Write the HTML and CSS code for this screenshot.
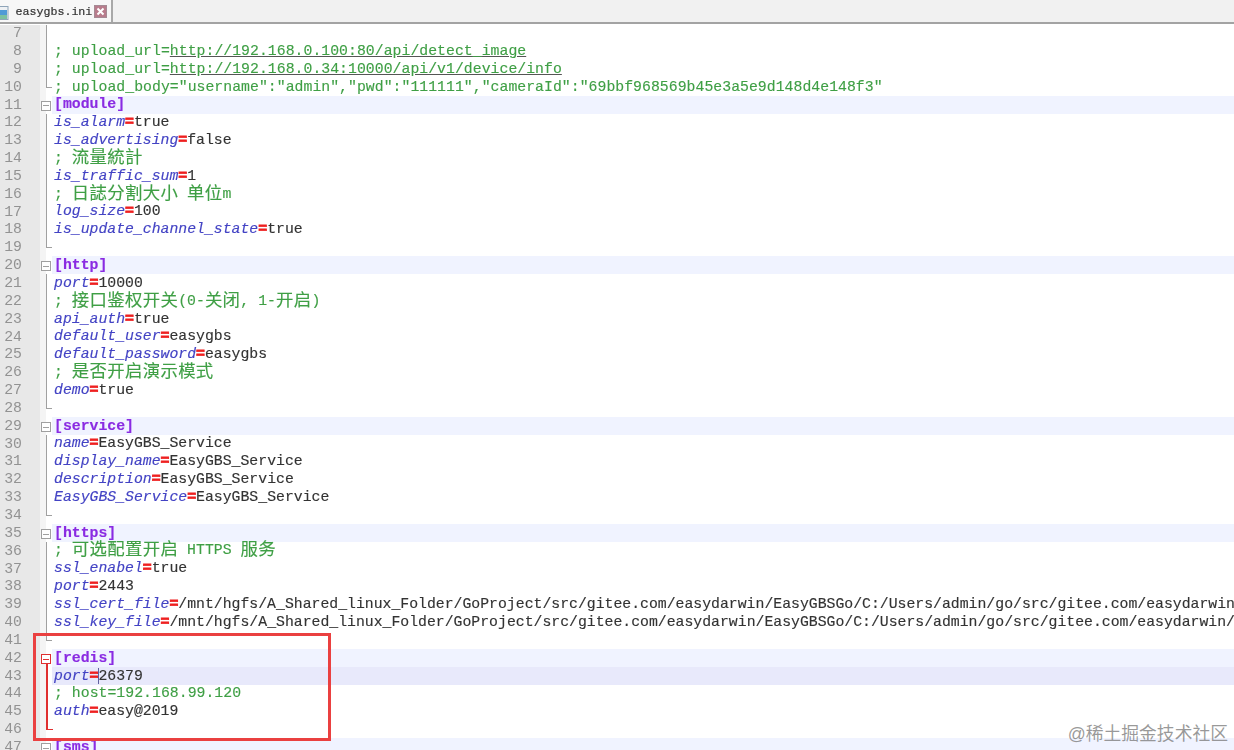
FILE: index.html
```html
<!DOCTYPE html>
<html lang="zh">
<head>
    <meta charset="utf-8">
    <title>easygbs.ini</title>
    <link rel="stylesheet" href="styles.css">
</head>
<body>
    <div class="tabbar">
        <div class="tab">
            <svg class="tab-icon" width="9" height="14" viewBox="0 0 9 14"><rect x="-6" y="0.5" width="14" height="13" fill="#eef1f4" stroke="#8fa4b8"/><rect x="-5" y="4" width="12" height="5" fill="#4f9ad6"/><rect x="-5" y="9" width="12" height="4" fill="#7cc0a0"/></svg>
            <span class="tab-name">easygbs.ini</span>
            <svg class="tab-close" width="13" height="13" viewBox="0 0 13 13"><rect x="0.5" y="0.5" width="12" height="12" fill="#b87c8c" stroke="#a58a94"/><path d="M3.5 3.5l6 6M9.5 3.5l-6 6" stroke="#fff" stroke-width="2"/></svg>
        </div>
    </div>

    <div class="editor">
        <div class="row"><span class="num">7</span><span class="fold line"></span><span class="code"></span></div>
        <div class="row"><span class="num">8</span><span class="fold line"></span><span class="code c">; upload_url=<u>http://192.168.0.100:80/api/detect_image</u></span></div>
        <div class="row"><span class="num">9</span><span class="fold line"></span><span class="code c">; upload_url=<u>http://192.168.0.34:10000/api/v1/device/info</u></span></div>
        <div class="row"><span class="num">10</span><span class="fold end"></span><span class="code c">; upload_body="username":"admin","pwd":"111111","cameraId":"69bbf968569b45e3a5e9d148d4e148f3"</span></div>
        <div class="row head"><span class="num">11</span><span class="fold box"></span><span class="code s">[module]</span></div>
        <div class="row"><span class="num">12</span><span class="fold line"></span><span class="code"><i>is_alarm</i><b>=</b>true</span></div>
        <div class="row"><span class="num">13</span><span class="fold line"></span><span class="code"><i>is_advertising</i><b>=</b>false</span></div>
        <div class="row"><span class="num">14</span><span class="fold line"></span><span class="code c">; <span class="cjk">流量統計</span></span></div>
        <div class="row"><span class="num">15</span><span class="fold line"></span><span class="code"><i>is_traffic_sum</i><b>=</b>1</span></div>
        <div class="row"><span class="num">16</span><span class="fold line"></span><span class="code c">; <span class="cjk">日誌分割大小</span> <span class="cjk">单位</span>m</span></div>
        <div class="row"><span class="num">17</span><span class="fold line"></span><span class="code"><i>log_size</i><b>=</b>100</span></div>
        <div class="row"><span class="num">18</span><span class="fold line"></span><span class="code"><i>is_update_channel_state</i><b>=</b>true</span></div>
        <div class="row"><span class="num">19</span><span class="fold end"></span><span class="code"></span></div>
        <div class="row head"><span class="num">20</span><span class="fold box"></span><span class="code s">[http]</span></div>
        <div class="row"><span class="num">21</span><span class="fold line"></span><span class="code"><i>port</i><b>=</b>10000</span></div>
        <div class="row"><span class="num">22</span><span class="fold line"></span><span class="code c">; <span class="cjk">接口鉴权开关</span>(0-<span class="cjk">关闭</span>, 1-<span class="cjk">开启</span>)</span></div>
        <div class="row"><span class="num">23</span><span class="fold line"></span><span class="code"><i>api_auth</i><b>=</b>true</span></div>
        <div class="row"><span class="num">24</span><span class="fold line"></span><span class="code"><i>default_user</i><b>=</b>easygbs</span></div>
        <div class="row"><span class="num">25</span><span class="fold line"></span><span class="code"><i>default_password</i><b>=</b>easygbs</span></div>
        <div class="row"><span class="num">26</span><span class="fold line"></span><span class="code c">; <span class="cjk">是否开启演示模式</span></span></div>
        <div class="row"><span class="num">27</span><span class="fold line"></span><span class="code"><i>demo</i><b>=</b>true</span></div>
        <div class="row"><span class="num">28</span><span class="fold end"></span><span class="code"></span></div>
        <div class="row head"><span class="num">29</span><span class="fold box"></span><span class="code s">[service]</span></div>
        <div class="row"><span class="num">30</span><span class="fold line"></span><span class="code"><i>name</i><b>=</b>EasyGBS_Service</span></div>
        <div class="row"><span class="num">31</span><span class="fold line"></span><span class="code"><i>display_name</i><b>=</b>EasyGBS_Service</span></div>
        <div class="row"><span class="num">32</span><span class="fold line"></span><span class="code"><i>description</i><b>=</b>EasyGBS_Service</span></div>
        <div class="row"><span class="num">33</span><span class="fold line"></span><span class="code"><i>EasyGBS_Service</i><b>=</b>EasyGBS_Service</span></div>
        <div class="row"><span class="num">34</span><span class="fold end"></span><span class="code"></span></div>
        <div class="row head"><span class="num">35</span><span class="fold box"></span><span class="code s">[https]</span></div>
        <div class="row"><span class="num">36</span><span class="fold line"></span><span class="code c">; <span class="cjk">可选配置开启</span> HTTPS <span class="cjk">服务</span></span></div>
        <div class="row"><span class="num">37</span><span class="fold line"></span><span class="code"><i>ssl_enabel</i><b>=</b>true</span></div>
        <div class="row"><span class="num">38</span><span class="fold line"></span><span class="code"><i>port</i><b>=</b>2443</span></div>
        <div class="row"><span class="num">39</span><span class="fold line"></span><span class="code"><i>ssl_cert_file</i><b>=</b>/mnt/hgfs/A_Shared_linux_Folder/GoProject/src/gitee.com/easydarwin/EasyGBSGo/C:/Users/admin/go/src/gitee.com/easydarwin</span></div>
        <div class="row"><span class="num">40</span><span class="fold line"></span><span class="code"><i>ssl_key_file</i><b>=</b>/mnt/hgfs/A_Shared_linux_Folder/GoProject/src/gitee.com/easydarwin/EasyGBSGo/C:/Users/admin/go/src/gitee.com/easydarwin/</span></div>
        <div class="row"><span class="num">41</span><span class="fold end"></span><span class="code"></span></div>
        <div class="row head"><span class="num">42</span><span class="fold box active"></span><span class="code s">[redis]</span></div>
        <div class="row current"><span class="num">43</span><span class="fold line active"></span><span class="code"><i>port</i><b>=</b><span class="caret"></span>26379</span></div>
        <div class="row"><span class="num">44</span><span class="fold line active"></span><span class="code c">; host=192.168.99.120</span></div>
        <div class="row"><span class="num">45</span><span class="fold line active"></span><span class="code"><i>auth</i><b>=</b>easy@2019</span></div>
        <div class="row"><span class="num">46</span><span class="fold end active"></span><span class="code"></span></div>
        <div class="row head"><span class="num">47</span><span class="fold box"></span><span class="code s">[sms]</span></div>
    </div>

    <!-- annotation drawn over the screenshot -->
    <div class="redbox"></div>
    <div class="watermark">@稀土掘金技术社区</div>
</body>
</html>
```

FILE: styles.css
```css
body {
    margin: 0;
    height: 750px;
    overflow: hidden;
    background-color: white;
    font-family: "Liberation Mono", "Noto Sans CJK SC", monospace;
    font-size: 14.8px;
    position: relative;
}
.tabbar {
    height: 22px;
    background-color: #f1f1f1;
    border-bottom: 2px solid #a3a3a3;
    display: flex;
    filter: blur(0.3px);
}
.tab {
    width: 113px;
    height: 22px;
    box-sizing: border-box;
    background-color: #f7f7f7;
    border-right: 2px solid #a8a8a8;
    display: flex;
    align-items: center;
    color: #333;
    font-size: 11.65px;
    -webkit-text-stroke: 0.2px #333;
}
.tab-icon {
    flex: none;
    margin-top: 3px;
}
.tab-name {
    margin-left: 6.5px;
    width: 78.5px;
    flex: none;
    white-space: nowrap;
}
.tab-close {
    flex: none;
}
.editor {
    padding-top: 0.5px;
    filter: blur(0.3px);
}
.row {
    display: flex;
    height: 17.85px;
}
.num, .code {
    box-sizing: border-box;
    padding-top: 1.5px;
    line-height: 15.85px;
}
.num {
    width: 40px;
    flex: none;
    padding-top: 1.7px;
    padding-right: 18px;
    text-align: right;
    color: #929292;
    background-color: #e8e8e8;
}
.fold {
    width: 12px;
    flex: none;
    position: relative;
    background: linear-gradient(90deg, #f4f4f4 6px, white 6px);
    --fold: #a0a0a0;
    --weight: 1px;
}
.fold.active {
    --fold: #e03030;
    --weight: 2px;
}
.fold.line::before, .fold.end::before {
    content: "";
    position: absolute;
    left: 6px;
    top: 0;
    bottom: 0;
    border-left: var(--weight) solid var(--fold);
}
.fold.end::before {
    bottom: 8px;
    width: 5px;
    border-bottom: 1px solid var(--fold);
}
.fold.box::before {
    content: "";
    position: absolute;
    left: 1px;
    top: 5px;
    width: 8px;
    height: 8px;
    border: 1px solid var(--fold);
    background: linear-gradient(var(--fold), var(--fold)) center / 6px 1px no-repeat white;
}
.fold.box.active::after {
    content: "";
    position: absolute;
    left: 6px;
    top: 15px;
    bottom: 0;
    border-left: 2px solid var(--fold);
}
.code {
    flex: 1;
    min-width: 0;
    padding-left: 2px;
    white-space: nowrap;
    color: #333;
    -webkit-text-stroke: 0.15px;
}
.head .code {
    background-color: #f0f3ff;
}
.current .code {
    background-color: #e8e9fb;
}
.code i {
    color: #4343c4;
}
.code b {
    color: #ee2020;
    -webkit-text-stroke: 0.8px #ee2020;
}
.c {
    color: #3f9f45;
    letter-spacing: 0.03px;
}
.c u {
    text-decoration-color: #555;
}
.s {
    color: #8a2be2;
    font-weight: bold;
}
.cjk {
    font-size: 17.4px;
    line-height: 0;
    letter-spacing: 0.33px;
    vertical-align: -1px;
}
.caret {
    display: inline-block;
    width: 0;
    height: 16px;
    margin-right: -1px;
    vertical-align: middle;
    border-left: 1px solid #6060a0;
}
.redbox {
    position: absolute;
    left: 33px;
    top: 633px;
    width: 292px;
    height: 102px;
    border: 3px solid #ea4040;
}
.watermark {
    position: absolute;
    right: 6px;
    top: 722px;
    font-family: "Liberation Sans", "Noto Sans CJK SC", sans-serif;
    font-size: 17.8px;
    line-height: 24px;
    color: rgba(120, 120, 120, 0.75);
    white-space: nowrap;
}
```
